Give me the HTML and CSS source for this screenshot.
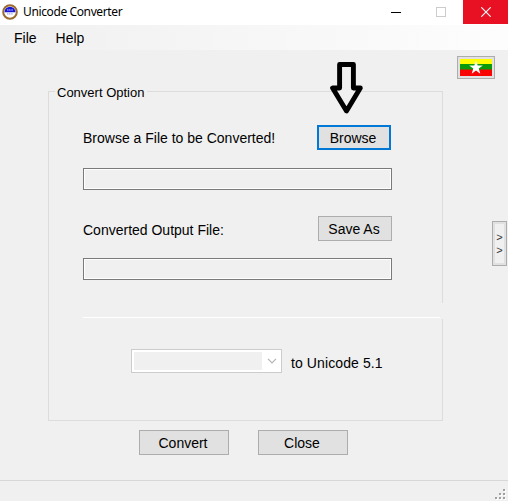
FILE: index.html
```html
<!DOCTYPE html>
<html lang="en">
<head>
<meta charset="utf-8">
<title>Unicode Converter</title>
<link rel="stylesheet" href="styles.css">
</head>
<body>
<header class="titlebar">
  <svg class="app-icon" width="16" height="16" viewBox="0 0 16 16">
    <circle cx="8" cy="8" r="6.8" fill="#fff" stroke="#9a6b2c" stroke-width="2"/>
    <path d="M2.5 8.2A5.5 5.5 0 0 1 13.5 8.2Z" fill="#1717d2"/>
    <path d="M5 6H11" stroke="#8b8bf5" stroke-width="1.3" stroke-dasharray="1.3 .4"/>
    <path d="M5 9.8H11" stroke="#a5a5ee" stroke-width="1.3" stroke-dasharray="1.3 .5"/>
  </svg>
  <h1 class="title">Unicode Converter</h1>
  <div class="win-controls">
    <span class="win"><svg width="10" height="10"><path d="M0 5.5H10" stroke="#000"/></svg></span>
    <span class="win"><svg width="10" height="10"><rect x=".5" y=".5" width="9" height="9" fill="none" stroke="#ccc"/></svg></span>
    <span class="win win-close"><svg width="10" height="10"><path d="M.3 .3L9.7 9.7M9.7 .3L.3 9.7" stroke="#fff" stroke-width="1.1"/></svg></span>
  </div>
</header>
<nav class="menubar"><span>File</span><span>Help</span></nav>
<main class="window">
  <div class="content">
    <section class="group">
      <h2 class="legend">Convert Option</h2>
      <div class="row row-browse"><span>Browse a File to be Converted!</span><button class="btn focused">Browse</button></div>
      <div class="field"></div>
      <div class="row row-save"><span class="output-label">Converted Output File:</span><button class="btn">Save As</button></div>
      <div class="field field-output"></div>
      <div class="divider"></div>
      <div class="target">
        <div class="combo"><div class="combo-value"></div><svg width="10" height="6"><path d="M1 .8L5 4.8L9 .8" fill="none" stroke="#b4b4b4" stroke-width="1.2"/></svg></div>
        <span class="target-label">to Unicode 5.1</span>
      </div>
      <div class="border-gap"></div>
    </section>
    <div class="actions"><button class="btn wide">Convert</button><button class="btn wide">Close</button></div>
  </div>
  <aside class="side">
    <button class="flag-btn">
      <svg width="32" height="17" viewBox="0 0 32 17">
        <rect width="32" height="5" fill="#ff0"/>
        <rect y="5" width="32" height="6" fill="#0a9a0a"/>
        <rect y="10.5" width="32" height="6.5" fill="#fa0505"/>
        <path d="M16 1.6L17.7 6.4H22.8L18.7 9.5L20.3 14.8L16 11.6L11.7 14.8L13.3 9.5L9.2 6.4H14.3Z" fill="#fff"/>
      </svg>
    </button>
    <button class="expand"><span>&gt;</span><span>&gt;</span></button>
  </aside>
  <svg class="arrow" width="34" height="56" viewBox="0 0 34 56"><path d="M9.6 4.5H23.4V28H30.3L16.5 51L2.6 28H9.6Z" fill="#f0f0f0" stroke="#000" stroke-width="4.9" stroke-linejoin="round"/></svg>
</main>
<footer class="statusbar">
  <svg width="12" height="12">
    <path d="M9 1h2v2h-2zM5 5h2v2h-2zM9 5h2v2h-2zM1 9h2v2h-2zM5 9h2v2h-2zM9 9h2v2h-2z" fill="#fff"/>
    <path d="M8 0h2v2h-2zM4 4h2v2h-2zM8 4h2v2h-2zM0 8h2v2h-2zM4 8h2v2h-2zM8 8h2v2h-2z" fill="#a0a0a0"/>
  </svg>
</footer>
</body>
</html>
```
FILE: styles.css
```css
* { box-sizing: border-box; }
body {
  margin: 0;
  width: 508px;
  height: 501px;
  overflow: hidden;
  display: flex;
  flex-direction: column;
  background: #f0f0f0;
  color: #000;
  font: 14px/16px "Liberation Sans", Arial, sans-serif;
  white-space: nowrap;
}
svg { display: block; flex: none; }
h1, h2 { margin: 0; font-weight: normal; }
button { padding: 0; font: inherit; color: inherit; }

.titlebar { height: 25px; display: flex; background: #fff; }
.app-icon { margin: 4px 5px 0 2px; }
.title { font: 12px/24px "Noto Sans", sans-serif; letter-spacing: -0.38px; }
.win-controls { display: flex; margin-left: auto; }
.win { width: 45px; height: 24px; display: flex; align-items: center; justify-content: center; }
.win-close { background: #e81123; }

.menubar {
  height: 25px;
  padding: 5px 14px;
  display: flex;
  gap: 19px;
  background: linear-gradient(90deg, #f0f0f0, #fdfdfd);
}

.window { position: relative; height: 430px; display: flex; padding-left: 48px; }
.content { width: 395px; padding-top: 41px; }
.group { position: relative; height: 330px; border: 1px solid #dcdcdc; padding-left: 34px; }
.legend {
  width: 92px;
  height: 16px;
  margin: -8px 0 0 -28px;
  padding: 1px 0 0 2px;
  background: #f0f0f0;
  font-size: 13px;
  line-height: 16px;
}
.row { width: 309px; height: 25px; display: flex; align-items: center; justify-content: space-between; }
.row-browse { width: 308px; margin-top: 25px; }
.row-save { margin-top: 26px; }
.output-label { padding-top: 2px; }
.btn { width: 74px; height: 25px; padding-right: 2px; border: 1px solid #adadad; background: #e1e1e1; }
.focused { border: 2px solid #0078d7; }
.wide { width: 90px; }
.field { width: 309px; height: 22px; margin-top: 18px; border: 1px solid #7a7a7a; box-shadow: inset 0 0 0 1px #fff; }
.field-output { margin-top: 17px; }
.divider { width: 357px; height: 1px; margin-top: 37px; background: #fff; }
.target { display: flex; align-items: center; gap: 9px; margin: 31px 0 0 48px; }
.target-label { padding-top: 4px; letter-spacing: 0.1px; }
.combo { width: 151px; height: 24px; display: flex; align-items: center; padding: 2px 4px 2px 2px; justify-content: space-between; border: 1px solid #ccc; background: #fff; }
.combo-value { width: 128px; height: 18px; background: #f0f0f0; }
.border-gap { position: absolute; right: -1px; top: 211px; width: 1px; height: 16px; background: #f0f0f0; }
.actions { display: flex; gap: 29px; padding: 9px 0 0 91px; }

.side { width: 65px; display: flex; flex-direction: column; padding: 6px 1px 0 14px; }
.flag-btn { width: 38px; height: 23px; display: flex; align-items: center; justify-content: center; border: 1px solid #adadad; background: #e1e1e1; }
.expand {
  width: 15px;
  height: 45px;
  margin-top: 142px;
  align-self: flex-end;
  display: flex;
  flex-direction: column;
  align-items: center;
  justify-content: center;
  border: 1px solid #adadad;
  background: #f0f0f0;
  box-shadow: inset 0 0 0 2px #e1e1e1;
  color: #333;
  font-size: 11px;
  line-height: 13px;
}
.arrow { position: absolute; left: 330px; top: 10px; }

.statusbar { height: 21px; border-top: 1px solid #d7d7d7; display: flex; justify-content: flex-end; padding: 8px 1px 0 0; }
```
